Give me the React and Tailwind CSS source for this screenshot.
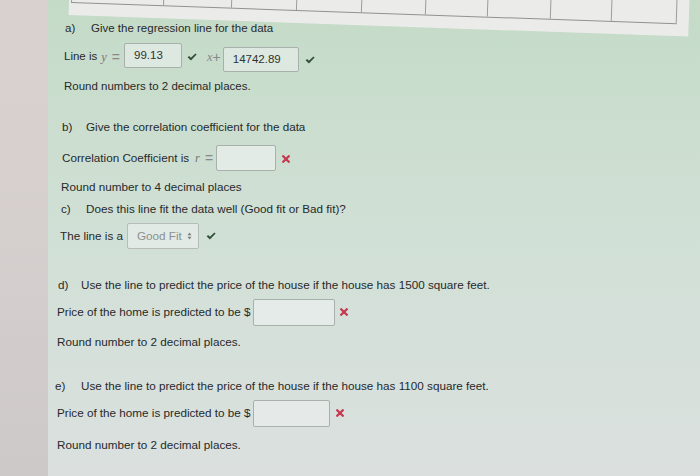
import React from "react";

const Check = ({ className = "" }) => (
  <svg viewBox="0 0 10 8" className={"w-[10px] h-[8px] " + className}>
    <path d="M0.6 4.3 L2.2 2.9 L3.9 4.7 L8.4 0.4 L9.6 1.6 L3.9 7.6 Z" fill="#2f4d38" />
  </svg>
);

const Cross = ({ className = "" }) => (
  <svg viewBox="0 0 8 8" className={"w-[8px] h-[8px] " + className}>
    <path d="M1.2 1.2 L6.8 6.8 M6.8 1.2 L1.2 6.8" fill="none" stroke="#c63a4f" strokeWidth="2.3" strokeLinecap="round" />
  </svg>
);

const Box = ({ w, children, className = "" }) => (
  <div
    className={
      "h-[25px] border border-[#a8b0ab] rounded-[2px] bg-[#dde8e0] flex items-center px-[9px] text-[#2f3331] " +
      className
    }
    style={{ width: w }}
  >
    {children}
  </div>
);

export default function App() {
  const cells = [92, 68, 65, 65, 64, 62, 63, 61, 66];
  return (
    <div className="w-[700px] h-[476px] flex overflow-hidden font-['Liberation_Sans',Arial,sans-serif] text-[11.7px] text-[#27292b]">
      <div className="w-[48px] shrink-0 bg-gradient-to-b from-[#d9d1d0] via-[#d5cfce] to-[#cdc9c8]" />
      <div className="flex-1 flex flex-col bg-gradient-to-b from-[#c4dbc7] via-[#d1e0d6] to-[#dbe0df]">
        {/* table panel */}
        <div className="-mt-[25px] h-[40px] ml-[22px] mr-[10px] bg-[#ebecea] rotate-[2deg] origin-top-left flex items-end pb-[12px] pl-[2px]">
          <div className="flex h-[30px] border-b border-[#8f9290]">
            {cells.map((w, i) => (
              <div key={i} className="h-full border-l border-[#9a9d9b] last:border-r" style={{ width: w }} />
            ))}
          </div>
        </div>

        {/* a */}
        <div className="mt-[6px] h-[16px] flex items-center pl-[17px] text-[11.5px]">
          <span className="w-[26px]">a)</span>
          <span>Give the regression line for the data</span>
        </div>
        <div className="mt-[5px] h-[30px] flex items-center pl-[16px] text-[11.5px]">
          <span>Line is</span>
          <span className="ml-[4px] italic font-['Liberation_Serif',serif] text-[#777] text-[12.5px]">y</span>
          <span className="ml-[5px] text-[#888] text-[14px]">=</span>
          <Box w={58} className="ml-[4px] -mt-[3px]">99.13</Box>
          <Check className="ml-[5px]" />
          <span className="ml-[10px] italic font-['Liberation_Serif',serif] text-[#888] text-[12.5px]">x</span>
          <span className="text-[#888] text-[14px]">+</span>
          <Box w={76} className="ml-[2px] mt-[5px]">14742.89</Box>
          <Check className="ml-[6px] mt-[5px]" />
        </div>
        <div className="mt-[7px] h-[16px] flex items-center pl-[16px] text-[11.5px]">
          Round numbers to 2 decimal places.
        </div>

        {/* b */}
        <div className="mt-[24px] h-[16px] flex items-center pl-[14px]">
          <span className="w-[24px]">b)</span>
          <span>Give the correlation coefficient for the data</span>
        </div>
        <div className="mt-[9px] h-[28px] flex items-center pl-[14px]">
          <span>Correlation Coefficient is</span>
          <span className="ml-[6px] italic font-['Liberation_Serif',serif] text-[#777] text-[12.5px]">r</span>
          <span className="ml-[5px] text-[#888] text-[14px]">=</span>
          <Box w={60} className="ml-[3px] h-[26px] bg-[#e3ebe6]" />
          <Cross className="ml-[6px] mt-[2px]" />
        </div>
        <div className="mt-[7px] h-[16px] flex items-center pl-[13px]">Round number to 4 decimal places</div>

        {/* c */}
        <div className="mt-[6px] h-[16px] flex items-center pl-[13px]">
          <span className="w-[25px]">c)</span>
          <span>Does this line fit the data well (Good fit or Bad fit)?</span>
        </div>
        <div className="mt-[5px] h-[28px] flex items-center pl-[12px]">
          <span>The line is a</span>
          <div className="ml-[4px] w-[72px] h-[26px] border border-[#b6bcb8] rounded-[2px] bg-[#e2eae5] flex items-center pl-[9px] pr-[6px] text-[#8c908e]">
            <span className="flex-1">Good Fit</span>
            <svg viewBox="0 0 6 10" className="w-[5px] h-[8px]">
              <path d="M3 0.5 L5.5 4 L0.5 4 Z M3 9.5 L5.5 6 L0.5 6 Z" fill="#7c807e" />
            </svg>
          </div>
          <Check className="ml-[7px]" />
        </div>

        {/* d */}
        <div className="mt-[27px] h-[16px] flex items-center pl-[10px]">
          <span className="w-[23px]">d)</span>
          <span>Use the line to predict the price of the house if the house has 1500 square feet.</span>
        </div>
        <div className="mt-[5px] h-[28px] flex items-center pl-[9px]">
          <span>Price of the home is predicted to be $</span>
          <Box w={82} className="ml-[2px] h-[27px] bg-[#e5ebe8]" />
          <Cross className="ml-[5px]" />
        </div>
        <div className="mt-[8px] h-[16px] flex items-center pl-[9px]">Round number to 2 decimal places.</div>

        {/* e */}
        <div className="mt-[28px] h-[16px] flex items-center pl-[7px]">
          <span className="w-[26px]">e)</span>
          <span>Use the line to predict the price of the house if the house has 1100 square feet.</span>
        </div>
        <div className="mt-[5px] h-[28px] flex items-center pl-[9px]">
          <span>Price of the home is predicted to be $</span>
          <Box w={77} className="ml-[2px] h-[27px] bg-[#e5eae8]" />
          <Cross className="ml-[6px]" />
        </div>
        <div className="mt-[10px] h-[16px] flex items-center pl-[9px]">Round number to 2 decimal places.</div>
      </div>
    </div>
  );
}
